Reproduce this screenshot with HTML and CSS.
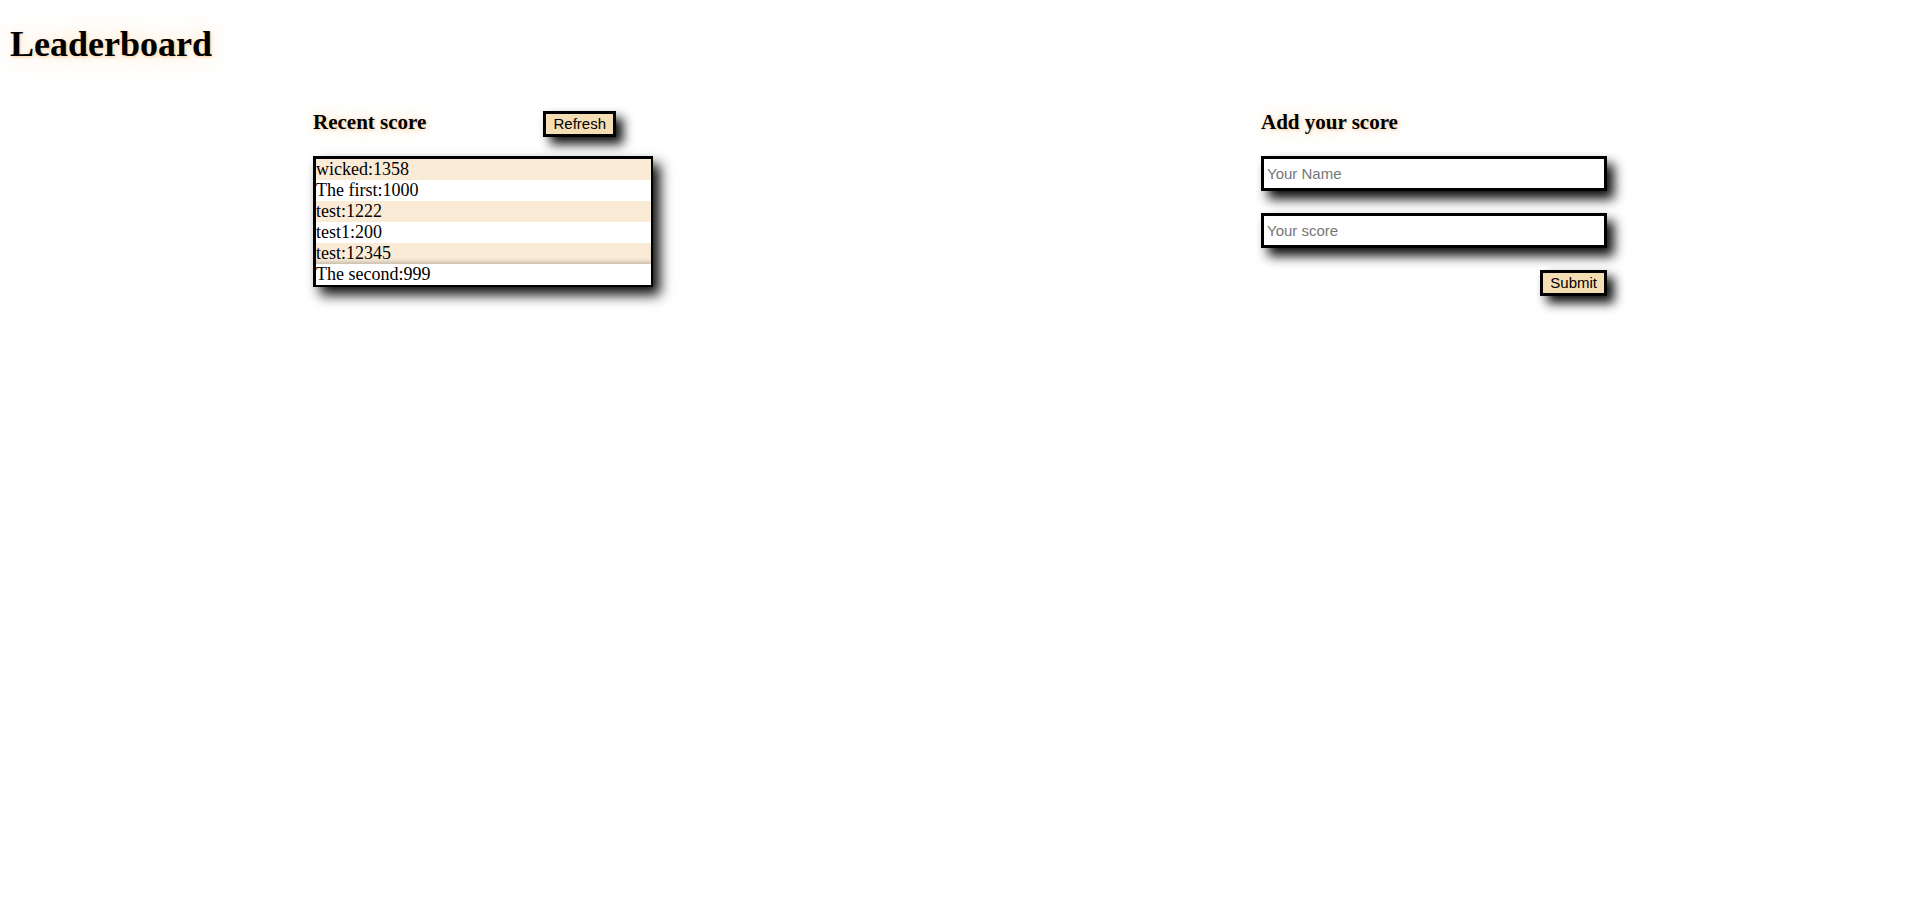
FILE: index.html
```html
<!DOCTYPE html>
<html lang="en">
<head>
<meta charset="utf-8">
<title>Leaderboard</title>
<link rel="stylesheet" href="styles.css">
</head>
<body>
<h1 class="title">Leaderboard</h1>
<main class="board">
  <section class="recent">
    <div class="recent-head">
      <h3 class="section-title">Recent score</h3>
      <button class="btn" type="button">Refresh</button>
    </div>
    <ul class="scores">
      <li class="score">wicked:1358</li>
      <li class="score">The first:1000</li>
      <li class="score">test:1222</li>
      <li class="score">test1:200</li>
      <li class="score score-shade">test:12345</li>
      <li class="score">The second:999</li>
    </ul>
  </section>
  <section class="add">
    <h3 class="section-title">Add your score</h3>
    <form class="add-form">
      <input class="field" type="text" placeholder="Your Name">
      <input class="field" type="text" placeholder="Your score">
      <button class="btn btn-submit" type="button">Submit</button>
    </form>
  </section>
</main>
</body>
</html>
```

FILE: styles.css
```css
html, body {
  background: #ffffff;
}

body {
  margin: 0;
  min-height: 100vh;
  font-family: "Liberation Serif", "Times New Roman", serif;
  font-size: 18px;
  color: #000;
}

.title {
  margin: 0;
  padding: 24px 0 24px 10px;
  font-size: 36px;
  font-weight: bold;
  line-height: 41px;
  text-shadow: 1px 1px 3px rgba(240, 170, 90, 0.55), 0 0 22px rgba(255, 214, 160, 0.7);
}

.board {
  display: grid;
  grid-template-columns: 948px 346px;
  padding-left: 313px;
  padding-bottom: 40px;
  align-items: start;
}

.section-title {
  margin: 21px 0;
  font-size: 21px;
  font-weight: bold;
  line-height: 24px;
  text-shadow: 1px 1px 3px rgba(240, 170, 90, 0.5), 0 0 14px rgba(255, 214, 160, 0.7);
}

.recent-head {
  display: flex;
  align-items: baseline;
  justify-content: space-between;
  width: 303px;
}

.btn {
  font-family: "Liberation Sans", Arial, sans-serif;
  font-size: 15px;
  line-height: 18px;
  color: #000;
  background: #f5deb3;
  border: 3px solid #000;
  padding: 1px 7px 1px 7px;
  margin: 0;
  box-shadow: 7px 7px 11px rgba(0, 0, 0, 0.95);
  cursor: pointer;
}

.scores {
  list-style: none;
  margin: 1px 0 0 0;
  padding: 0;
  width: 335px;
  border: 3px solid #000;
  border-width: 3px 2px 2px 3px;
  background: #fff;
  box-shadow: 7px 8px 12px rgba(0, 0, 0, 0.95);
}

.score {
  height: 21px;
  line-height: 21px;
  padding-left: 0;
  white-space: nowrap;
}

.score:nth-child(odd) {
  background: #faebd7;
}

.score-shade {
  box-shadow: inset 0 -4px 4px -2px rgba(0, 0, 0, 0.22);
}

.add-form {
  display: flex;
  flex-direction: column;
  gap: 22px;
  width: 346px;
}

.field {
  box-sizing: border-box;
  width: 346px;
  height: 35px;
  margin: 1px 0 0 0;
  padding: 0 3px;
  border: 3px solid #000;
  background: #fff;
  font-family: "Liberation Sans", Arial, sans-serif;
  font-size: 15px;
  color: #000;
  box-shadow: 7px 8px 12px rgba(0, 0, 0, 0.95);
  outline: none;
}

.field + .field {
  margin-top: 0;
}

.field::placeholder {
  color: #767676;
}

.btn-submit {
  align-self: flex-end;
}
```
